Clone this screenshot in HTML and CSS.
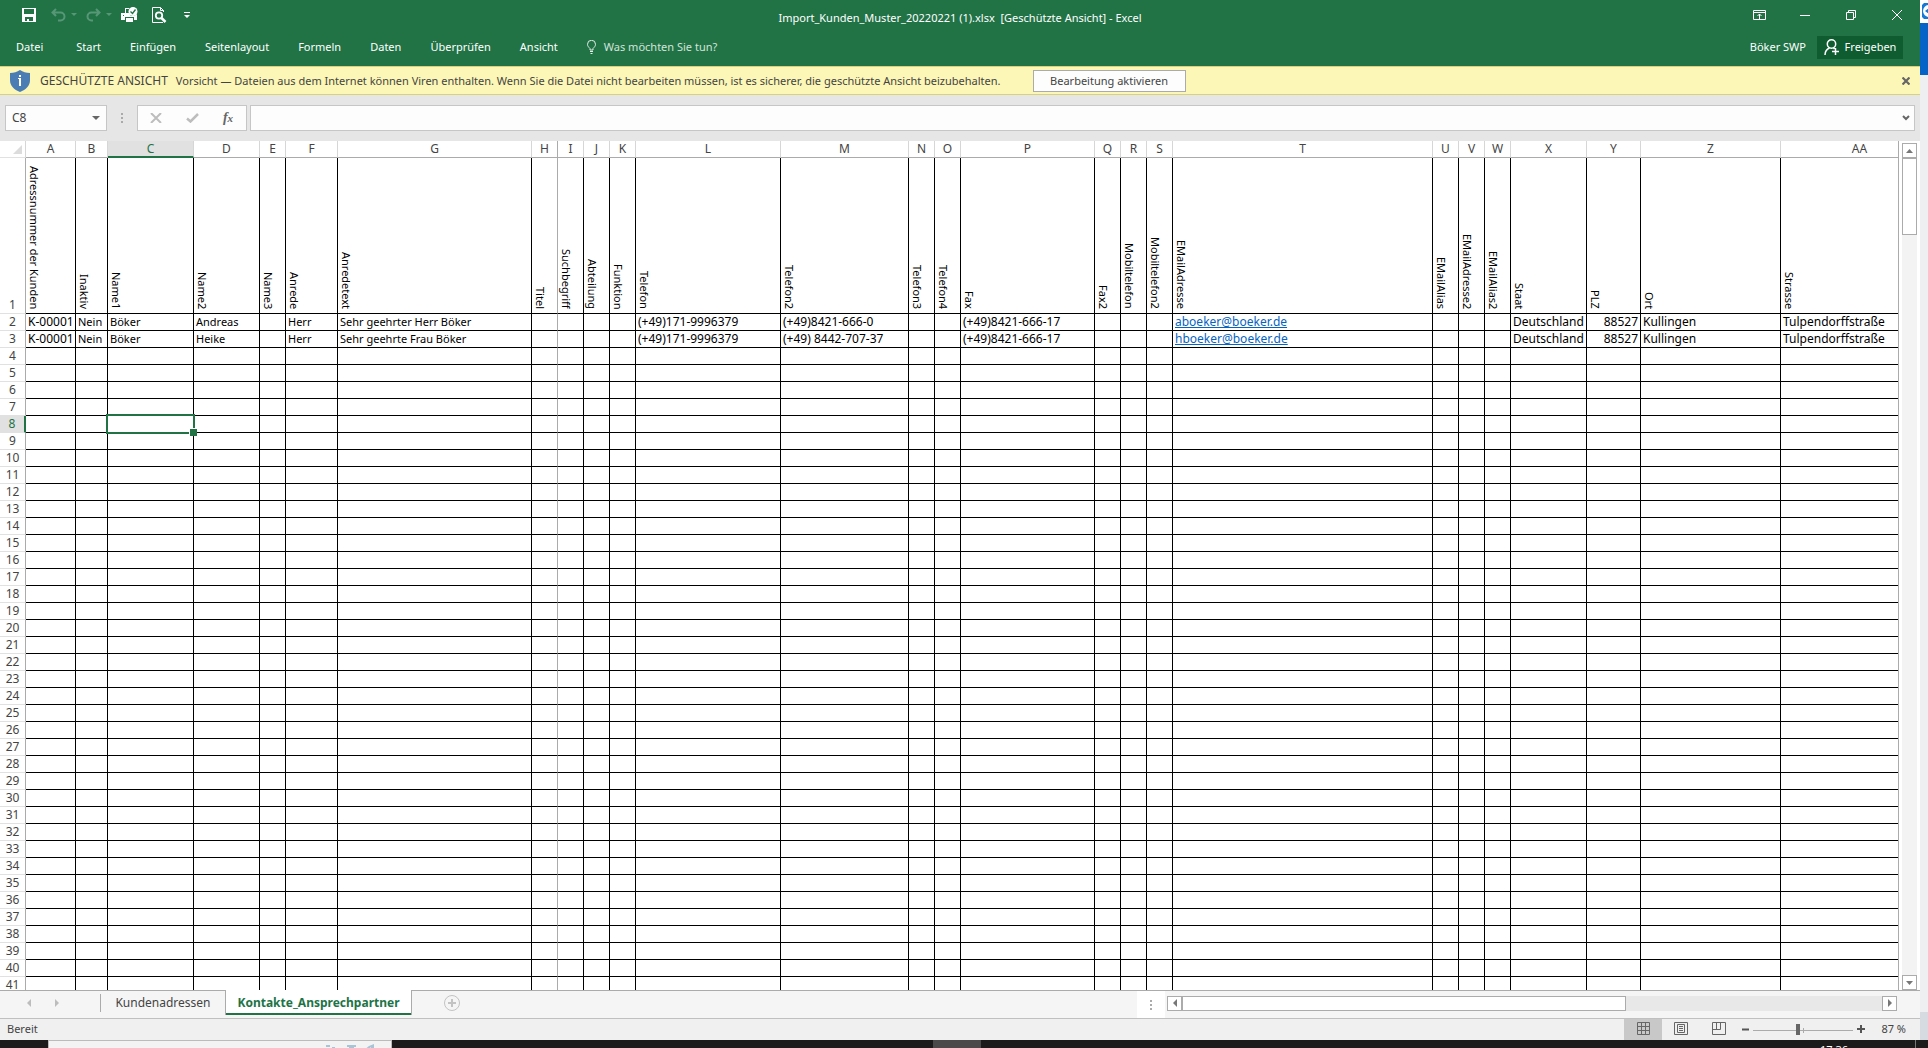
FILE: index.html
```html
<!DOCTYPE html>
<html lang="de">
<head>
<meta charset="utf-8">
<title>Import_Kunden_Muster_20220221 (1).xlsx - Excel</title>
<link rel="stylesheet" href="styles.css">
</head>
<body>
<div class="desktop">
<main class="window">
  <header class="titlebar">
    <div class="quick">
      <button class="q-save" aria-label="Speichern"><svg width="14" height="14" viewBox="0 0 14 14"><path fill="#fff" fill-rule="evenodd" d="M0 0h14v14H0zM2 1v5h10V1zM3 9v4h2v-2h2v2h4V9z"/></svg></button>
      <button class="q-dim" aria-label="Rückgängig"><svg width="15" height="14" viewBox="0 0 15 14"><path fill="none" stroke="#579775" stroke-width="2" d="M5 1L1.500 4.500L5 8M2 4.500h7.500a3.800 3.800 0 0 1 0 8H7"/></svg><svg width="6" height="4" viewBox="0 0 6 4"><path fill="#579775" d="M0 0h6L3 3z"/></svg></button>
      <button class="q-dim" aria-label="Wiederholen"><svg width="15" height="14" viewBox="0 0 15 14"><path fill="none" stroke="#579775" stroke-width="2" d="M10 1l3.500 3.500L10 8M13 4.500H5.500a3.800 3.800 0 0 0 0 8H7"/></svg><svg width="6" height="4" viewBox="0 0 6 4"><path fill="#579775" d="M0 0h6L3 3z"/></svg></button>
      <button class="q-print" aria-label="Schnelldruck"><svg width="17" height="16" viewBox="0 0 17 16"><path fill="#fff" fill-rule="evenodd" d="M4 1h4v1H5v4h3l2 3h3l3-2v6h-3v-3H4v3H0V6h4zM5 11h7v4H5zM2 8v1h1V8z"/><circle cx="12" cy="4.500" r="4.500" fill="#fff"/><path d="M9.500 4.500l2 2 3-4" fill="none" stroke="#217346" stroke-width="1.300"/></svg></button>
      <button class="q-preview" aria-label="Seitenansicht"><svg width="15" height="16" viewBox="0 0 15 16"><path fill="none" stroke="#fff" d="M5 15.500H.500V.500h8l3 3V5M8.500.500v3h3M4 15.500h7"/><circle cx="7" cy="8.500" r="3.200" fill="none" stroke="#fff" stroke-width="1.800"/><path stroke="#fff" stroke-width="2.500" d="M9.500 11l4 4"/></svg></button>
      <button class="q-more" aria-label="Symbolleiste anpassen"><svg width="6" height="7" viewBox="0 0 6 7"><path fill="#fff" d="M0 0h6v1H0zM0 3h6L3 6z"/></svg></button>
    </div>
    <h1>Import_Kunden_Muster_20220221 (1).xlsx&nbsp; [Geschützte Ansicht] - Excel</h1>
    <div class="controls">
      <button aria-label="Menüband-Anzeigeoptionen"><svg width="13" height="10" viewBox="0 0 13 10"><path fill="none" stroke="#fff" d="M.500.500h12v9H.500zM.500 2.500h12M6.500 9V4M4.500 6l2-2 2 2"/></svg></button>
      <button aria-label="Minimieren"><svg width="10" height="10" viewBox="0 0 10 10"><path stroke="#fff" d="M0 5.500h10"/></svg></button>
      <button aria-label="Verkleinern"><svg width="10" height="10" viewBox="0 0 10 10"><path fill="none" stroke="#fff" d="M.500 2.500h7v7h-7zM2.500 2V.500h7v7H8"/></svg></button>
      <button aria-label="Schließen"><svg width="10" height="10" viewBox="0 0 10 10"><path stroke="#fff" d="M0 0l10 10M10 0L0 10"/></svg></button>
    </div>
  </header>
  <nav class="ribbon">
    <button class="file">Datei</button><button>Start</button><button>Einfügen</button><button>Seitenlayout</button><button>Formeln</button><button>Daten</button><button>Überprüfen</button><button>Ansicht</button>
    <button class="tell"><svg width="9" height="14" viewBox="0 0 9 14"><path fill="none" stroke="#e3efe8" d="M3 10V8.500C1.500 7 .500 6 .500 4.300a4 4 0 0 1 8 0C8.500 6 7.500 7 6 8.500V10zM3 11.500h3M3.500 13.500h2"/></svg>Was möchten Sie tun?</button>
    <span class="account">Böker SWP</span>
    <button class="share"><svg width="16" height="16" viewBox="0 0 16 16"><circle cx="7.500" cy="5" r="4.200" fill="none" stroke="#fff" stroke-width="1.500"/><path fill="none" stroke="#fff" stroke-width="1.500" d="M1 16c0-4 2-6 4.500-7M11.500 9v7M8 12.500h7M9.500 9l1 1"/></svg>Freigeben</button>
  </nav>
  <section class="notice">
    <svg width="20" height="22" viewBox="0 0 20 22"><path fill="#4b7db5" d="M10 0c3 2 6 3 10 3v7c0 6-4 9.500-10 12C4 19.500 0 16 0 10V3c4 0 7-1 10-3z"/><path fill="#fff" d="M9 5h2v2H9zM8 8h3v8H9V9H8z"/></svg>
    <strong>GESCHÜTZTE ANSICHT</strong>
    <p>Vorsicht — Dateien aus dem Internet können Viren enthalten. Wenn Sie die Datei nicht bearbeiten müssen, ist es sicherer, die geschützte Ansicht beizubehalten.</p>
    <button class="enable">Bearbeitung aktivieren</button>
    <button class="dismiss" aria-label="Leiste schließen"><svg width="8" height="8" viewBox="0 0 8 8"><path stroke="#666" stroke-width="2.200" d="M.500.500l7 7M7.500.500l-7 7"/></svg></button>
  </section>
  <section class="formulabar">
    <div class="namebox"><input aria-label="Namenfeld" value="C8"><button aria-label="Namen anzeigen"><svg width="8" height="4" viewBox="0 0 8 4"><path fill="#666" d="M0 0h8L4 4z"/></svg></button></div>
    <span class="dots"></span>
    <div class="fx">
      <button aria-label="Abbrechen"><svg width="12" height="10" viewBox="0 0 12 10"><path stroke="#bdbdbd" stroke-width="2" d="M1 0l10 10M11 0L1 10"/></svg></button>
      <button aria-label="Eingeben"><svg width="13" height="10" viewBox="0 0 13 10"><path fill="none" stroke="#bdbdbd" stroke-width="2.500" d="M1 5.500l3.500 3L12 1"/></svg></button>
      <button class="fn" aria-label="Funktion einfügen"><i>f<small>x</small></i></button>
    </div>
    <div class="formula"><input aria-label="Bearbeitungsleiste"><button aria-label="Bearbeitungsleiste erweitern"><svg width="8" height="6" viewBox="0 0 8 6"><path fill="none" stroke="#666" stroke-width="2" d="M1 1l3 3 3-3"/></svg></button></div>
  </section>
  <section class="sheet">
    <div class="grid">
      <table>
        <colgroup><col class="w-row"><col class="w-a"><col class="w-b"><col class="w-c"><col class="w-d"><col class="w-s"><col class="w-f"><col class="w-g"><col class="w-s"><col class="w-s"><col class="w-s"><col class="w-s"><col class="w-l"><col class="w-m"><col class="w-s"><col class="w-s"><col class="w-p"><col class="w-s"><col class="w-s"><col class="w-s"><col class="w-t"><col class="w-s"><col class="w-s"><col class="w-s"><col class="w-x"><col class="w-y"><col class="w-z"><col class="w-aa"></colgroup>
        <thead><tr><th class="corner"><svg width="9" height="9" viewBox="0 0 9 9"><path fill="#dcdcdc" d="M9 0v9H0z"/></svg></th><th>A</th><th>B</th><th class="active">C</th><th>D</th><th>E</th><th>F</th><th>G</th><th>H</th><th>I</th><th>J</th><th>K</th><th>L</th><th>M</th><th>N</th><th>O</th><th>P</th><th>Q</th><th>R</th><th>S</th><th>T</th><th>U</th><th>V</th><th>W</th><th>X</th><th>Y</th><th>Z</th><th>AA</th></tr></thead>
        <tbody id="rows">
          <tr class="fields"><th>1</th><td><span>Adressnummer der Kunden</span></td><td><span>Inaktiv</span></td><td><span>Name1</span></td><td><span>Name2</span></td><td><span>Name3</span></td><td><span>Anrede</span></td><td><span>Anredetext</span></td><td><span>Titel</span></td><td><span>Suchbegriff</span></td><td><span>Abteilung</span></td><td><span>Funktion</span></td><td><span>Telefon</span></td><td><span>Telefon2</span></td><td><span>Telefon3</span></td><td><span>Telefon4</span></td><td><span>Fax</span></td><td><span>Fax2</span></td><td><span>Mobiltelefon</span></td><td><span>Mobiltelefon2</span></td><td><span>EMailAdresse</span></td><td><span>EMailAlias</span></td><td><span>EMailAdresse2</span></td><td><span>EMailAlias2</span></td><td><span>Staat</span></td><td><span>PLZ</span></td><td><span>Ort</span></td><td><span>Strasse</span></td></tr>
          <tr><th>2</th><td class="wide">K-00001</td><td>Nein</td><td>Böker</td><td>Andreas</td><td></td><td>Herr</td><td>Sehr geehrter Herr Böker</td><td></td><td></td><td></td><td></td><td class="wide">(+49)171-9996379</td><td class="wide">(+49)8421-666-0</td><td></td><td></td><td class="wide">(+49)8421-666-17</td><td></td><td></td><td></td><td class="wide"><a href="mailto:aboeker@boeker.de">aboeker@boeker.de</a></td><td></td><td></td><td></td><td class="wide">Deutschland</td><td class="wide num">88527</td><td class="wide">Kullingen</td><td class="wide">Tulpendorffstraße</td></tr>
          <tr><th>3</th><td class="wide">K-00001</td><td>Nein</td><td>Böker</td><td>Heike</td><td></td><td>Herr</td><td>Sehr geehrte Frau Böker</td><td></td><td></td><td></td><td></td><td class="wide">(+49)171-9996379</td><td class="wide">(+49) 8442-707-37</td><td></td><td></td><td class="wide">(+49)8421-666-17</td><td></td><td></td><td></td><td class="wide"><a href="mailto:hboeker@boeker.de">hboeker@boeker.de</a></td><td></td><td></td><td></td><td class="wide">Deutschland</td><td class="wide num">88527</td><td class="wide">Kullingen</td><td class="wide">Tulpendorffstraße</td></tr>
        </tbody>
      </table>
    </div>
    <div class="vscroll">
      <button aria-label="Nach oben"><svg width="7" height="4" viewBox="0 0 7 4"><path fill="#777" d="M0 4h7L3.500 0z"/></svg></button>
      <div class="vtrack"><div class="vthumb"></div></div>
      <button aria-label="Nach unten"><svg width="7" height="4" viewBox="0 0 7 4"><path fill="#777" d="M0 0h7L3.500 4z"/></svg></button>
    </div>
  </section>
  <section class="tabs">
    <div class="tabnav"><button aria-label="Vorheriges Blatt"><svg width="4" height="8" viewBox="0 0 4 8"><path fill="#bdbdbd" d="M4 0v8L0 4z"/></svg></button><button aria-label="Nächstes Blatt"><svg width="4" height="8" viewBox="0 0 4 8"><path fill="#bdbdbd" d="M0 0v8l4-4z"/></svg></button></div>
    <button class="tab">Kundenadressen</button>
    <button class="tab current">Kontakte_Ansprechpartner</button>
    <button class="add" aria-label="Neues Blatt"><svg width="16" height="16" viewBox="0 0 16 16"><circle cx="8" cy="8" r="7.500" fill="none" stroke="#c3c3c3"/><path stroke="#c3c3c3" stroke-width="2" d="M8 4v8M4 8h8"/></svg></button>
    <div class="splitter"><span class="dots"></span></div>
    <div class="hscroll">
      <button aria-label="Nach links"><svg width="4" height="8" viewBox="0 0 4 8"><path fill="#777" d="M4 0v8L0 4z"/></svg></button>
      <div class="htrack"><div class="hthumb"></div></div>
      <button aria-label="Nach rechts"><svg width="4" height="8" viewBox="0 0 4 8"><path fill="#777" d="M0 0v8l4-4z"/></svg></button>
    </div>
  </section>
  <footer class="status">
    <span class="ready">Bereit</span>
    <button class="view on" aria-label="Normal"><svg width="13" height="13" viewBox="0 0 13 13"><path fill="none" stroke="#666" d="M.500.500h12v12H.500zM4.500 0v13M8.500 0v13M0 4.500h13M0 8.500h13"/></svg></button>
    <button class="view" aria-label="Seitenlayout"><svg width="14" height="13" viewBox="0 0 14 13"><path fill="none" stroke="#666" d="M.500.500h13v12H.500zM3.500 2.500h7v8h-7zM5 4.500h4M5 6.500h4M5 8.500h4"/></svg></button>
    <button class="view" aria-label="Umbruchvorschau"><svg width="14" height="13" viewBox="0 0 14 13"><path fill="none" stroke="#666" d="M.500.500h13v12H.500zM.500 7.500h8V0M4.500 0v7"/></svg></button>
    <button class="zoom" aria-label="Verkleinern"><svg width="7" height="7" viewBox="0 0 7 7"><path stroke="#555" stroke-width="2" d="M0 3.500h7"/></svg></button>
    <input class="slider" type="range" min="0" max="100" value="44" aria-label="Zoom">
    <button class="zoom" aria-label="Vergrößern"><svg width="8" height="8" viewBox="0 0 8 8"><path stroke="#555" stroke-width="2" d="M0 4h8M4 0v8"/></svg></button>
    <span class="percent">87 %</span>
  </footer>
</main>
<aside class="behind"><div class="behind-top"><svg width="7" height="16" viewBox="0 0 7 16"><path fill="#1478d4" d="M2 0h5v16H2L0 14V2z"/><path fill="#fff" d="M7 2a6 6 0 0 0 0 12v-3L3 8l4-3z"/></svg></div><div class="behind-blue"></div><div class="behind-body"></div><div class="behind-foot"></div></aside>
</div>
<footer class="taskbar"><div class="search"><svg width="50" height="6" viewBox="0 0 50 6"><path fill="#a9c4d6" d="M0 1h4v2H0zM6 3h3v3H6zM21 1h9v2h-2v2h-5V3h-2zM38 6l5-4 5-2v6h-3V3l-3 3z"/></svg></div><div class="running"></div><time>17:36</time></footer>
<script src="rows.js"></script>
</body>
</html>
```
FILE: styles.css
```css
* { box-sizing: border-box; }
body { margin: 0; height: 100vh; display: flex; flex-direction: column; overflow: hidden; font: 11px/16px "Noto Sans", "Open Sans", sans-serif; color: #444; background: #1b1b1b; }
button, input { font: inherit; color: inherit; border: 0; padding: 0; margin: 0; background: none; border-radius: 0; }
button { display: flex; align-items: center; justify-content: center; white-space: nowrap; }
svg { display: block; flex: none; }
.desktop { flex: 1; min-height: 0; display: flex; }
.window { flex: 1; min-width: 0; display: flex; flex-direction: column; background: #fff; }

.titlebar { display: grid; grid-template-columns: 1fr auto 1fr; height: 32px; background: #217346; color: #fff; }
.quick { display: flex; align-items: center; padding: 0 0 2px 22px; }
.q-save { margin-right: 15px; }
.q-dim { gap: 5px; margin-right: 9px; }
.q-preview { margin-left: 14px; }
.q-more { margin-left: 17px; }
.titlebar h1 { margin: 0; padding-top: 4px; align-self: center; font-size: 11px; font-weight: 400; }
.controls { display: flex; justify-content: flex-end; }
.controls button { width: 46px; height: 30px; }

.ribbon { display: flex; align-items: center; gap: 29px; height: 34px; padding: 0 17px 4px 16px; background: #217346; color: #fff; }
.file { margin-right: 4px; }
.tell { gap: 8px; color: #d3e3da; }
.account { margin-left: auto; }
.share { height: 23px; width: 86px; gap: 5px; margin-left: -18px; background: #0e5c2f; }

.notice { display: flex; align-items: center; height: 29px; padding: 0 10px; background: #fcf7b6; border: solid #d8d27a; border-width: 1px 0; }
.notice strong { margin-left: 10px; font-size: 12px; font-weight: 400; }
.notice p { margin: 0 0 0 8px; white-space: nowrap; }
.enable { margin-left: 32px; width: 153px; height: 22px; background: #fdfdfd; border: 1px solid #ababab; }
.dismiss { margin-left: auto; width: 8px; height: 20px; }

.formulabar { display: flex; height: 46px; padding: 10px 5px; background: #e6e6e6; }
.namebox, .fx, .formula { display: flex; align-items: center; height: 26px; background: #fdfdfd; border: 1px solid #c6c6c6; }
.namebox { width: 102px; padding: 0 6px; }
.namebox input { flex: 1; min-width: 0; font-size: 12px; }
.dots { width: 2px; height: 10px; background: repeating-linear-gradient(#aaa 0 2px, transparent 2px 4px); }
.formulabar .dots { margin: 8px 14px; }
.fx { width: 110px; gap: 12px; padding-left: 6px; margin-right: 3px; }
.fx button { width: 24px; height: 20px; }
.fx .fn { font: 700 14px/16px "Liberation Serif", serif; color: #666; }
.fn small { font-size: 11px; }
.formula { flex: 1; padding: 0 4px; }
.formula input { flex: 1; }

.sheet { flex: 1; min-height: 0; display: flex; }
.grid { flex: 1; min-width: 0; overflow: hidden; border-right: 1px solid #ababab; }
table { table-layout: fixed; width: 1938px; border-collapse: separate; border-spacing: 0; color: #000; }
.w-row { width: 26px; } .w-a { width: 50px; } .w-b { width: 32px; } .w-c { width: 86px; } .w-d { width: 66px; }
.w-s { width: 26px; } .w-f { width: 52px; } .w-g { width: 194px; } .w-l { width: 145px; }
.w-m { width: 128px; } .w-p { width: 134px; } .w-t { width: 260px; } .w-x { width: 76px; } .w-y { width: 54px; }
.w-z { width: 140px; } .w-aa { width: 158px; }
th, td { height: 17px; padding: 0 0 0 2px; line-height: 16px; border: solid #000; border-width: 0 1px 1px 0; text-align: left; white-space: nowrap; }
th { padding: 0; font-size: 12px; font-weight: 400; color: #444; text-align: center; }
thead th { border-color: #ababab; border-right-color: #d6d6d6; }
thead .active { background: #e1e1e1; color: #217346; border-bottom: 2px solid #217346; line-height: 15px; }
.corner { border-bottom-color: #e1e1e1; }
.corner svg { margin-left: 13px; }
tbody th { border-right-color: #ababab; border-bottom-color: #e1e1e1; }
tr > :nth-child(9) { border-right-color: #ababab; }
.fields > * { height: 156px; vertical-align: bottom; }
.fields td { padding: 0; }
.fields span { display: block; width: 16px; margin-bottom: 4px; writing-mode: vertical-rl; }
.wide { font-size: 12px; }
.num { text-align: right; padding-right: 2px; }
td a { color: #0563c1; }
tbody th.active { background: #e1e1e1; color: #217346; border-right: 2px solid #217346; }
.cursor { position: relative; }
.cursor::before { content: ""; position: absolute; inset: -2px; border: 2px solid #217346; }
.cursor::after { content: ""; position: absolute; right: -4px; bottom: -4px; width: 7px; height: 7px; background: #217346; border: solid #fff; border-width: 1px 0 0 1px; }

.vscroll { display: flex; flex-direction: column; width: 21px; padding: 2px 3px 0; }
.vscroll button, .hscroll button { flex: none; width: 15px; height: 15px; background: #fff; border: 1px solid #ababab; }
.vtrack { flex: 1; background: #f3f3f3; }
.vthumb { height: 77px; background: #fff; border: 1px solid #ababab; }

.tabs { display: flex; height: 28px; padding-bottom: 2px; background: #f5f5f5; box-shadow: inset 0 1px #ababab; font-size: 12px; }
.tabnav { display: flex; align-items: center; gap: 24px; width: 101px; margin: 4px 0; padding-left: 27px; border-right: 1px solid #ababab; }
.tab { width: 124px; }
.current { width: 187px; height: 25px; background: #fff; border: solid #ababab; border-width: 0 1px; box-shadow: inset 0 -2px #217346; color: #217346; font-weight: 700; }
.add { margin-left: 32px; }
.splitter { display: flex; align-items: center; justify-content: center; width: 28px; margin: 1px 2px -2px auto; background: #fff; }
.hscroll { display: flex; align-items: center; width: 38%; margin-right: 23px; }
.htrack { flex: 1; height: 15px; background: #e8e8e8; }
.hthumb { width: 444px; max-width: 80%; height: 15px; background: #fff; border: 1px solid #ababab; }

.status { display: flex; align-items: center; height: 22px; padding: 0 14px 0 7px; background: #f0f0f0; border-top: 1px solid #c0c0c0; }
.ready, .percent { padding-bottom: 2px; }
.ready { margin-right: auto; }
.view { width: 38px; height: 21px; padding-bottom: 2px; }
.on { background: #c8c8c8; }
.zoom { width: 15px; height: 20px; padding-bottom: 1px; }
.slider { appearance: none; width: 100px; height: 12px; background: linear-gradient(#ababab, #ababab) 50px 4px / 1px 5px no-repeat, linear-gradient(#ababab, #ababab) 0 6px / 100% 1px no-repeat; }
.slider::-webkit-slider-thumb { appearance: none; width: 4px; height: 11px; background: #666; }
.percent { margin-left: 13px; }

.behind { display: flex; flex-direction: column; width: 8px; background: #fff; }
.behind-top { height: 23px; padding: 3px 0 0 1px; margin-left: 1px; }
.behind-blue { height: 52px; background: #0563c8; }
.behind-body { flex: 1; background: #eeeff1; }
.behind-foot { height: 28px; background: #d5dbe0; }
.taskbar { display: flex; height: 8px; overflow: hidden; background: #1b1b1b; color: #fff; }
.search { width: 344px; margin-left: 48px; padding: 3px 0 0 277px; background: #f3f3f3; border: solid #bbb; border-width: 1px 1px 0; }
.running { width: 48px; margin-left: 541px; background: #4a4a4a; }
.taskbar time { margin: 0 12px 0 auto; padding: 2px 67px 0 0; border-right: 1px solid #777; }
```
FILE: rows.js
```js
// Blank rows below the imported contacts, with the cell cursor on C8.
const body = document.getElementById('rows');
for (let n = 4; n <= 41; n++) {
  const row = body.insertRow();
  const head = document.createElement('th');
  head.textContent = n;
  row.append(head);
  for (let c = 0; c < 27; c++) row.insertCell();
  if (n === 8) {
    head.className = 'active';
    row.cells[3].className = 'cursor';
  }
}
```
